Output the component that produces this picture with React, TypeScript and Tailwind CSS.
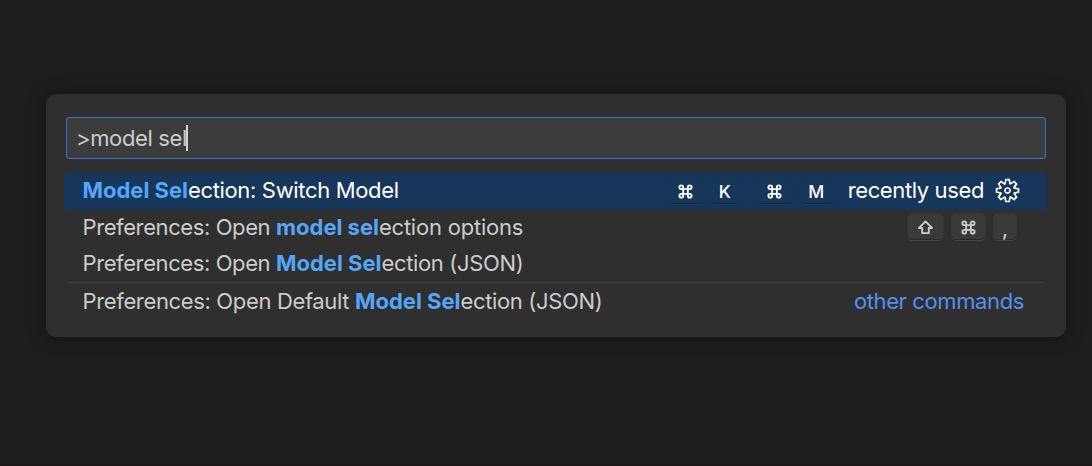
import type { ReactNode } from "react";

const Match = ({ children }: { children: ReactNode }) => (
  <span className="font-bold tracking-[-0.02px] text-[#54a6f8]">{children}</span>
);

const Command = () => (
  <svg viewBox="0 0 16 16" className="size-[15px]" fill="none" stroke="currentColor" strokeWidth="2">
    <path d="M5.5 5.5h5v5h-5z M5.5 5.5H3.5a2 2 0 1 1 2-2z M10.5 5.5V3.5a2 2 0 1 1 2 2z M10.5 10.5h2a2 2 0 1 1-2 2z M5.5 10.5v2a2 2 0 1 1-2-2z" />
  </svg>
);

const Shift = () => (
  <svg viewBox="0 0 18 16" className="h-[15px] w-[17px]" fill="none" stroke="currentColor" strokeWidth="2" strokeLinejoin="round">
    <path d="M9 1.5 2 8.5h3.5v5.5h7V8.5H16z" />
  </svg>
);

const Gear = () => (
  <svg viewBox="0 0 16 16" className="ml-[10px] size-[27px] -translate-y-px" fill="currentColor" fillRule="evenodd">
    <path d="M9.1 4.4L8.6 2H7.4l-.5 2.4-.7.3-2-1.3-.9.8 1.3 2-.2.7-2.4.5v1.2l2.4.5.3.8-1.3 2 .8.8 2-1.3.8.3.4 2.3h1.2l.5-2.4.8-.3 2 1.3.8-.8-1.3-2 .3-.8 2.3-.4V7.4l-2.4-.5-.3-.8 1.3-2-.8-.8-2 1.3-.7-.2zM9.4 1l.5 2.4L12 2.1l2 2-1.4 2.1 2.4.4v2.8l-2.4.5L14 12l-2 2-2.1-1.4-.5 2.4H6.6l-.5-2.4L4 13.9l-2-2 1.4-2.1L1 9.4V6.6l2.4-.5L2.1 4l2-2 2.1 1.4.4-2.4h2.8zm.6 7c0 1.1-.9 2-2 2s-2-.9-2-2 .9-2 2-2 2 .9 2 2zM8 9c.6 0 1-.4 1-1s-.4-1-1-1-1 .4-1 1 .4 1 1 1z" />
  </svg>
);

const Key = ({ children, className, active = false }: { children: ReactNode; className: string; active?: boolean }) => (
  <kbd
    className={`flex h-7 shrink-0 items-center justify-center rounded-[5px] border pt-px font-[Inter,sans-serif] leading-none font-medium tracking-normal ${
      active
        ? "border-[#1b3551] border-b-[#2b3949] text-[17.5px] text-white shadow-[inset_0_-1px_0_#112d49]"
        : "border-[#363636] border-b-[#454545] bg-[#3a3a3a] text-[20px] text-[#cccccc] shadow-[inset_0_-1px_0_#292929]"
    } ${className}`}
  >
    {children}
  </kbd>
);

export default function App() {
  return (
    <main className="flex h-[466px] w-[1092px] flex-col overflow-hidden border-b-2 border-[#1c171a] bg-[#1e1e1e] pt-[94px] pl-[46px] font-[Inter,sans-serif] text-[22px] tracking-[-0.28px] text-[#cccccc]">
      <section className="flex h-[243px] w-[1020px] flex-col rounded-[10px] bg-[#2f2f2f] pt-[23px] shadow-[0_0_16px_3px_rgba(0,0,0,0.36)]">
        <div className="mx-5 flex h-[42px] shrink-0 items-center rounded-[3px] border border-[#3279cb] bg-[#3c3c3c] pl-[9px]">
          <span className="whitespace-pre tracking-[-0.36px]">{">model sel"}</span>
          <span className="-ml-px h-[26px] w-[2px] bg-[#d4d4d4]" />
        </div>
        <ul className="mt-[13px] mr-[19px] ml-[18px] flex flex-col whitespace-pre">
          <li className="flex h-[38px] items-center rounded-[5px] bg-[#17375a] pl-[18.5px] text-white">
            <span className="pb-[2px]"><Match>Model Sel</Match><span className="tracking-[-0.34px]">ection: Switch Model</span></span>
            <div className="mr-[26px] ml-auto flex items-center">
              <Key active className="w-[35px]"><Command /></Key>
              <Key active className="ml-[7px] w-[30px]">K</Key>
              <Key active className="ml-[17px] w-[36px]"><Command /></Key>
              <Key active className="ml-[6px] w-[35px]">M</Key>
              <span className="ml-[14px] pb-[2px] tracking-[-0.38px]">recently used</span>
              <Gear />
            </div>
          </li>
          <li className="flex h-[36px] items-center pl-[18.5px]">
            <span className="pb-[2px]"><span className="tracking-[-0.4px]">Preferences: Open </span><Match>model sel</Match><span className="tracking-[-0.22px]">ection options</span></span>
            <div className="mr-[30px] ml-auto flex items-center gap-[7px] pb-[2px]">
              <Key className="w-[37px]"><Shift /></Key>
              <Key className="w-[35px]"><Command /></Key>
              <Key className="w-[24px]"><span className="pt-[3px]">,</span></Key>
            </div>
          </li>
          <li className="flex h-[36px] items-center pl-[18.5px]">
            <span className="pb-[2px]"><span className="tracking-[-0.4px]">Preferences: Open </span><Match>Model Sel</Match><span className="tracking-[-0.34px]">ection (JSON)</span></span>
          </li>
          <li className="mx-[3px] h-px bg-[#414145]" />
          <li className="flex h-[38px] items-center pl-[18.5px]">
            <span className="pb-[2px]"><span className="tracking-[-0.35px]">Preferences: Open Default </span><Match>Model Sel</Match><span className="tracking-[-0.34px]">ection (JSON)</span></span>
            <span className="mr-[23px] ml-auto pb-[2px] tracking-[-0.38px] text-[#558ff2]">other commands</span>
          </li>
        </ul>
      </section>
    </main>
  );
}
